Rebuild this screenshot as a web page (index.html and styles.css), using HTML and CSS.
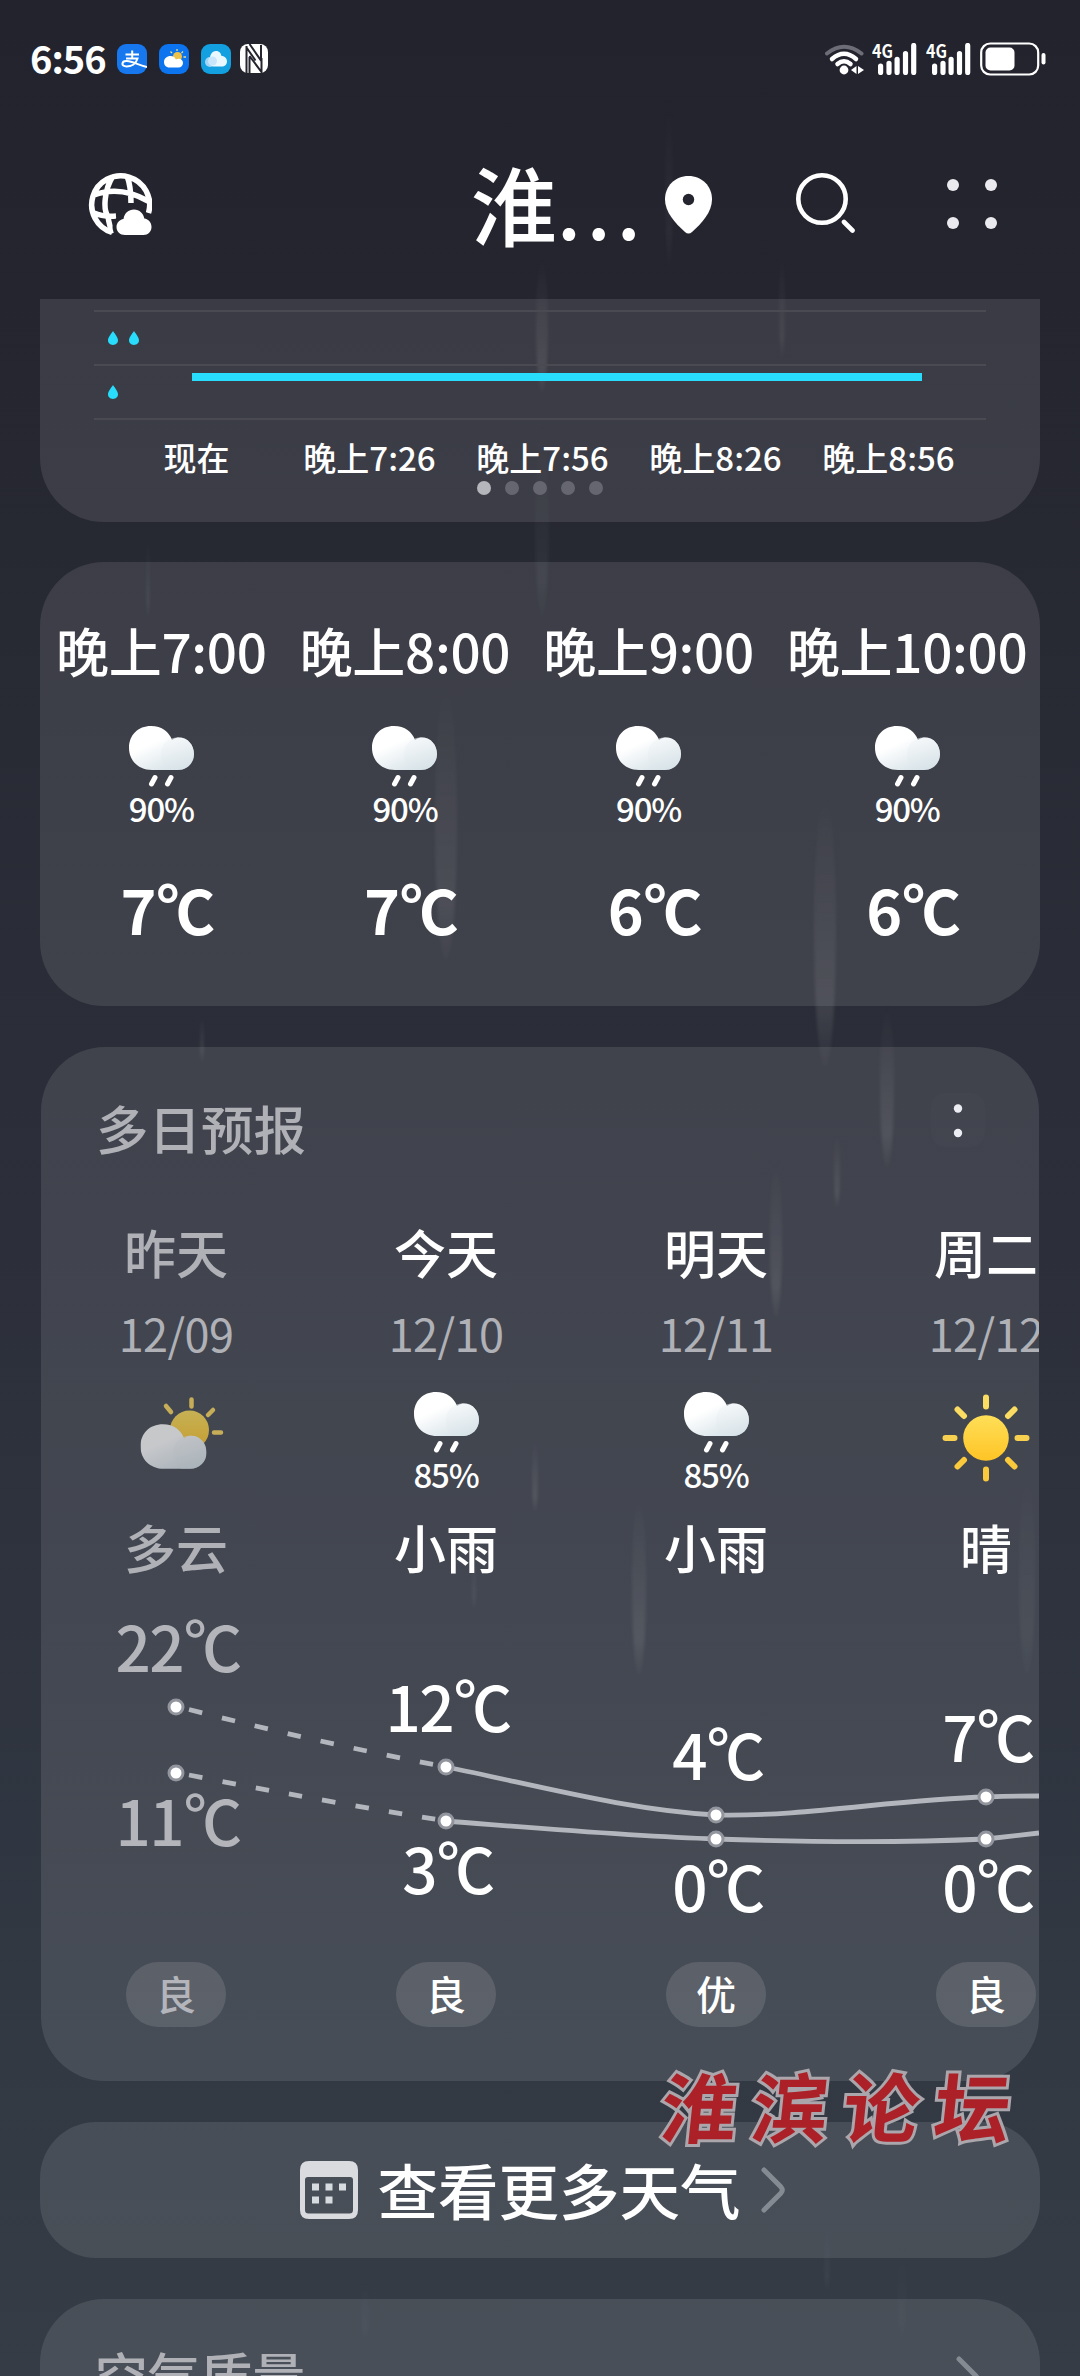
FILE: index.html
```
<!DOCTYPE html>
<html lang="zh-CN">

<head>
    <meta charset="UTF-8">
    <meta name="viewport" content="width=device-width, initial-scale=1.0">
    <title>天气</title>
    <link rel="stylesheet" href="styles.css">
</head>

<body>
    <!-- 公用图标 -->
    <svg width="0" height="0" class="defs">
        <defs>
            <linearGradient id="cloudBig" x1="0.2" y1="0.1" x2="0.8" y2="1">
                <stop offset="0.3" stop-color="#fff" />
                <stop offset="1" stop-color="#d3e0e6" />
            </linearGradient>
            <linearGradient id="cloudSmall" x1="0.4" y1="0" x2="0.6" y2="1">
                <stop offset="0" stop-color="#f3f6f8" />
                <stop offset="1" stop-color="#d9e4e9" />
            </linearGradient>
            <linearGradient id="sunFill" x1="0" y1="0" x2="0" y2="1">
                <stop offset="0" stop-color="#ffdf58" />
                <stop offset="1" stop-color="#fec425" />
            </linearGradient>
            <linearGradient id="rainFill" x1="0" y1="0" x2="0" y2="1">
                <stop offset="0" stop-color="#fff" stop-opacity="0" />
                <stop offset="0.8" stop-color="#fff" stop-opacity="0.09" />
                <stop offset="1" stop-color="#fff" stop-opacity="0.02" />
            </linearGradient>
            <symbol id="cloud" viewBox="0 0 65 44">
                <path d="M22 0C33 0 40 6 43 14C46 12 48 11.500 50 11.500C59 11.500 65 19 65 28C65 37 58 44 49 44H23C9 44 0 34 0 22C0 9 9 0 22 0Z" fill="url(#cloudBig)" />
                <path d="M49 11.500C58.500 11.500 65 19 65 28C65 37 58 44 49 44H40C34 40 32 35 32 28C32 19 39 11.500 49 11.500Z" fill="url(#cloudSmall)" opacity="0.6" />
            </symbol>
            <symbol id="rain" viewBox="0 0 65 61">
                <use href="#cloud" width="65" height="44" />
                <path d="M26 51.500L22.500 58M42 51.500L38.500 58" stroke="#fff" stroke-width="5" stroke-linecap="round" />
            </symbol>
            <symbol id="drop" viewBox="0 0 10 14">
                <path d="M5 0C7 3 10 6.500 10 9.300C10 12 7.800 14 5 14C2.200 14 0 12 0 9.300C0 6.500 3 3 5 0Z" fill="#29dcfb" />
            </symbol>
            <symbol id="signal" viewBox="0 0 46 32">
                <text x="0" y="15" class="net" textLength="21" lengthAdjust="spacingAndGlyphs">4G</text>
                <path d="M8.600 23V29.500M17 20.300V29.500M25.100 16.300V29.500M33.500 10.500V29.500M41.700 2.500V29.500" stroke="#fff" stroke-width="5.200" stroke-linecap="round" />
            </symbol>
            <symbol id="arrow" viewBox="0 0 24 46">
                <path d="M3 3L20 20Q22.500 23 20 26L3 43" fill="none" stroke="#858b93" stroke-width="5" stroke-linecap="round" />
            </symbol>
        </defs>
    </svg>

    <!-- 雨滴背景 -->
    <svg class="rainfall" width="1080" height="2376" viewBox="0 0 1080 2376" fill="url(#rainFill)">
        <ellipse cx="669" cy="180" rx="4" ry="88" opacity="0.4" />
        <ellipse cx="542" cy="325" rx="6" ry="68" />
        <ellipse cx="542" cy="520" rx="7" ry="100" opacity="0.5" />
        <ellipse cx="782" cy="305" rx="3" ry="54" opacity="0.7" />
        <ellipse cx="148" cy="578" rx="2" ry="42" opacity="0.7" />
        <ellipse cx="446" cy="820" rx="11" ry="140" opacity="0.8" />
        <ellipse cx="825" cy="930" rx="11" ry="136" />
        <ellipse cx="887" cy="1085" rx="7" ry="82" />
        <ellipse cx="837" cy="1170" rx="3" ry="38" />
        <ellipse cx="776" cy="1240" rx="6" ry="78" />
        <ellipse cx="202" cy="1038" rx="2" ry="24" />
        <ellipse cx="535" cy="1474" rx="3" ry="38" />
        <ellipse cx="474" cy="1580" rx="2" ry="30" opacity="0.6" />
        <ellipse cx="639" cy="1585" rx="7" ry="90" />
        <ellipse cx="1027" cy="1570" rx="8" ry="105" opacity="0.5" />
        <ellipse cx="827" cy="2255" rx="3" ry="36" opacity="0.4" />
        <ellipse cx="902" cy="2290" rx="5" ry="52" opacity="0.2" />
        <ellipse cx="365" cy="2310" rx="4" ry="30" opacity="0.3" />
    </svg>

    <!-- 状态栏 -->
    <div class="status">
        <span class="time">6:56</span>
        <div class="apps">
            <svg width="30" height="30" viewBox="0 0 30 30">
                <rect width="30" height="30" rx="9" fill="#1677ef" />
                <path d="M8.500 10.500H22M15.200 6.500V14.500M9 14.500H20.500C19 20 14 22.500 9.500 22.500C3.500 22.500 4.500 16.500 10 17C16 17.500 21 21 30 23" fill="none" stroke="#fff" stroke-width="2" />
            </svg>
            <svg width="30" height="30" viewBox="0 0 30 30">
                <rect width="30" height="30" rx="9" fill="#0b74ee" />
                <path d="M13 9L11.500 7.500M18 7V5M22.500 9L24 7.500M24.500 13H27" stroke="#e8dc8c" stroke-width="1.300" />
                <circle cx="18.500" cy="12.500" r="4.500" fill="#efc148" />
                <path d="M11.500 12C14.500 12 16 13.500 16.800 15.500C21 13.500 24 16 24 19C24 21.500 22 23.500 19.500 23.500H10.500C7 23.500 5 21 5 18C5 14.500 8 12 11.500 12Z" fill="#fff" />
            </svg>
            <svg width="30" height="30" viewBox="0 0 30 30">
                <rect width="30" height="30" rx="9" fill="#12a0e0" />
                <circle cx="9" cy="18" r="5" fill="#a3d5f7" />
                <path d="M15 7C18.500 7 20 9.500 20.500 12C24 12 26 14.500 26 17.500C26 20.500 23.500 22.500 21 22.500H13C10 22.500 8 20 9 16.500C8.500 11 11 7 15 7Z" fill="#e9f8ff" />
                <circle cx="11.500" cy="17" r="4.500" fill="#c7e6fb" />
            </svg>
            <svg class="nfc" width="28" height="29" viewBox="0 0 28 29">
                <rect width="28" height="29" rx="8" fill="#fff" />
                <path d="M6.500 2V29M6.500 3.500L15.500 16.500M9.500 0L21 16.500V1M9.500 12L21.500 28V14M9.500 13V29" fill="none" stroke="#24252f" stroke-width="2" />
            </svg>
        </div>
        <div class="device">
            <svg width="39" height="31" viewBox="0 0 39 31" fill="none" stroke-linecap="round">
                <path d="M2 9.500Q19 -4 36.500 9.500" stroke="#6c6d76" stroke-width="4" />
                <path d="M7 15Q19 4.500 31 15" stroke="#fff" stroke-width="4.500" />
                <path d="M12.500 20Q19 14.500 25.500 20" stroke="#fff" stroke-width="4.500" />
                <circle cx="19" cy="26" r="4.400" fill="#fff" />
                <path d="M26 26L31.500 22V30ZM39 26L33 22V30Z" fill="#fff" />
            </svg>
            <svg class="bars" width="46" height="32"><use href="#signal" /></svg>
            <svg class="bars" width="46" height="32"><use href="#signal" /></svg>
            <svg class="battery" width="66" height="34" viewBox="0 0 66 34">
                <rect x="1.200" y="1.500" width="57" height="31" rx="9" fill="none" stroke="#fff" stroke-width="2.200" />
                <rect x="5.500" y="5.500" width="29" height="23" rx="5" fill="#fff" />
                <rect x="61.500" y="11" width="4" height="11.500" rx="2" fill="#fff" />
            </svg>
        </div>
    </div>

    <!-- 顶部导航 -->
    <div class="header">
        <svg class="globe" width="64" height="64" viewBox="0 0 64 64">
            <path d="M60.500 41A29 29 0 1 0 24 60.500M25 4C16 18 15 38 20 44Q21 54 25 61M39 4Q43 14 43 31M6 23Q32 13 60 29M6 41Q15 45 28 44" fill="none" stroke="#fff" stroke-width="5.500" />
            <path d="M37 63C32 63 28.500 59.500 28.500 55C28.500 51 31.500 47.500 35.500 47C36.500 41 40.500 37.500 46 37.500C51.500 37.500 55.500 41.500 56.300 46.500C60.500 47 63.500 50.500 63.500 55C63.500 59.500 60 63 55.500 63Z" fill="#fff" stroke="#24252f" stroke-width="8" paint-order="stroke" />
        </svg>
        <h1 class="city">淮<span>...</span></h1>
        <svg class="pin" width="47" height="58" viewBox="0 0 47 58">
            <path d="M23.500 0C37 0 47 10 47 23.500C47 36 37 47 27 56Q23.500 59 20 56C10 47 0 36 0 23.500C0 10 10 0 23.500 0Z" fill="#fff" />
            <circle cx="23.500" cy="23.500" r="5.700" fill="#24252f" />
        </svg>
        <svg class="search" width="60" height="60" viewBox="0 0 60 60" fill="none" stroke="#fff" stroke-linecap="round">
            <circle cx="26" cy="26" r="23.700" stroke-width="4.600" />
            <path d="M48 49L56.500 57.500" stroke-width="4.600" />
        </svg>
        <svg class="more" width="52" height="52" viewBox="0 0 52 52" fill="#ebebef">
            <circle cx="7" cy="7" r="6" />
            <circle cx="45" cy="7" r="6" />
            <circle cx="7" cy="45" r="6" />
            <circle cx="45" cy="45" r="6" />
        </svg>
    </div>

    <!-- 降水趋势 -->
    <div class="card trend">
        <div class="line">
            <svg width="10" height="14"><use href="#drop" /></svg>
            <svg width="10" height="14"><use href="#drop" /></svg>
        </div>
        <div class="line">
            <svg width="10" height="14"><use href="#drop" /></svg>
            <i class="level"></i>
        </div>
        <div class="labels">
            <span>现在</span>
            <span>晚上7:26</span>
            <span>晚上7:56</span>
            <span>晚上8:26</span>
            <span>晚上8:56</span>
        </div>
        <div class="dots">
            <i class="active"></i><i></i><i></i><i></i><i></i>
        </div>
    </div>

    <!-- 逐小时 -->
    <div class="card hours">
        <div class="hour">
            <p class="clock">晚上7:00</p>
            <svg width="65" height="61"><use href="#rain" /></svg>
            <p class="percent">90%</p>
            <p class="temp">7<span>°</span>C</p>
        </div>
        <div class="hour">
            <p class="clock">晚上8:00</p>
            <svg width="65" height="61"><use href="#rain" /></svg>
            <p class="percent">90%</p>
            <p class="temp">7<span>°</span>C</p>
        </div>
        <div class="hour">
            <p class="clock">晚上9:00</p>
            <svg width="65" height="61"><use href="#rain" /></svg>
            <p class="percent">90%</p>
            <p class="temp">6<span>°</span>C</p>
        </div>
        <div class="hour">
            <p class="clock">晚上10:00</p>
            <svg width="65" height="61"><use href="#rain" /></svg>
            <p class="percent">90%</p>
            <p class="temp">6<span>°</span>C</p>
        </div>
    </div>

    <!-- 多日预报 -->
    <div class="card daily">
        <div class="card-title">
            <h2>多日预报</h2>
            <svg width="54" height="54" viewBox="0 0 54 54">
                <rect width="54" height="54" rx="14" fill="#fff" opacity="0.01" />
                <circle cx="27" cy="15.500" r="4.200" fill="#ecedf3" />
                <circle cx="27" cy="40" r="4.200" fill="#ecedf3" />
            </svg>
        </div>
        <div class="days">
            <div class="day past">
                <p class="name">昨天</p>
                <p class="date">12/09</p>
                <div class="icon">
                    <svg width="102" height="101" viewBox="0 0 102 101">
                        <path d="M41 14L46 20M66.500 7.500V14.500M88 18L83 23M89 40.500H96" stroke="#ffd95c" stroke-width="4.500" stroke-linecap="round" />
                        <circle cx="64.500" cy="38" r="19.500" fill="url(#sunFill)" />
                        <use href="#cloud" x="15.500" y="32" width="66" height="45" />
                    </svg>
                </div>
                <p class="name">多云</p>
            </div>
            <div class="day">
                <p class="name">今天</p>
                <p class="date">12/10</p>
                <div class="icon">
                    <svg width="65" height="61"><use href="#rain" /></svg>
                    <p class="percent">85%</p>
                </div>
                <p class="name">小雨</p>
            </div>
            <div class="day">
                <p class="name">明天</p>
                <p class="date">12/11</p>
                <div class="icon">
                    <svg width="65" height="61"><use href="#rain" /></svg>
                    <p class="percent">85%</p>
                </div>
                <p class="name">小雨</p>
            </div>
            <div class="day">
                <p class="name">周二</p>
                <p class="date">12/12</p>
                <div class="icon">
                    <svg width="102" height="101" viewBox="0 0 102 101">
                        <circle cx="51" cy="46" r="22.800" fill="url(#sunFill)" />
                        <g stroke-width="6" stroke-linecap="round">
                            <path d="M51 5.500V14.500M22.500 17.500L29 24M79.500 17.500L73 24" stroke="#fadc62" />
                            <path d="M10.500 46H19.500M82.500 46H91.500" stroke="#f8d050" />
                            <path d="M51 77.500V86.500M22.500 74.500L29 68M79.500 74.500L73 68" stroke="#fbc93c" />
                        </g>
                    </svg>
                </div>
                <p class="name">晴</p>
            </div>
        </div>
        <svg class="chart" width="998" height="386" viewBox="0 0 998 386">
            <g fill="none" stroke="#b3b6bd" stroke-width="4.800">
                <path d="M148 133.500Q275 166 393 188.500" stroke-dasharray="13.500 20.300" />
                <path d="M148 199Q275 224 396 243.500" stroke-dasharray="13.500 20.300" />
                <path d="M405 191C495 209 585 234 675 239C765 241 855 223 945 221Q972 220 998 220" />
                <path d="M405 245C495 252 585 260 675 263C765 266 855 267 945 263Q972 260 998 257" />
            </g>
            <g class="points">
                <circle cx="135" cy="131" r="7" />
                <circle cx="405" cy="191" r="7" />
                <circle cx="675" cy="239" r="7" />
                <circle cx="945" cy="221" r="7" />
                <circle cx="135" cy="197" r="7" />
                <circle cx="405" cy="245" r="7" />
                <circle cx="675" cy="263" r="7" />
                <circle cx="945" cy="263" r="7" />
            </g>
            <g class="degree">
                <text class="old" x="137" y="96">22<tspan class="ring" dy="-5">°</tspan><tspan dy="5">C</tspan></text>
                <text x="407" y="156">12<tspan class="ring" dy="-5">°</tspan><tspan dy="5">C</tspan></text>
                <text x="677" y="204">4<tspan class="ring" dy="-5">°</tspan><tspan dy="5">C</tspan></text>
                <text x="947" y="186">7<tspan class="ring" dy="-5">°</tspan><tspan dy="5">C</tspan></text>
                <text class="old" x="137" y="270">11<tspan class="ring" dy="-5">°</tspan><tspan dy="5">C</tspan></text>
                <text x="407" y="318">3<tspan class="ring" dy="-5">°</tspan><tspan dy="5">C</tspan></text>
                <text x="677" y="336">0<tspan class="ring" dy="-5">°</tspan><tspan dy="5">C</tspan></text>
                <text x="947" y="336">0<tspan class="ring" dy="-5">°</tspan><tspan dy="5">C</tspan></text>
            </g>
        </svg>
        <div class="air">
            <div><span class="old">良</span></div>
            <div><span>良</span></div>
            <div><span>优</span></div>
            <div><span>良</span></div>
        </div>
    </div>

    <!-- 更多天气 -->
    <div class="card link">
        <svg width="58" height="58" viewBox="0 0 58 58">
            <path fill-rule="evenodd" d="M9 0H49Q58 0 58 9V49Q58 58 49 58H9Q0 58 0 49V9Q0 0 9 0ZM8 16Q5 16 5 19V49Q5 52.500 8.500 52.500H49.500Q53 52.500 53 49V19Q53 16 50 16Z" fill="#dadbde" />
            <path d="M12 22.500h7v7h-7zM25.500 22.500h7v7h-7zM39 22.500h7v7h-7zM12 35.500h7v7h-7zM25.500 35.500h7v7h-7z" fill="#d6dbdf" />
        </svg>
        <span>查看更多天气</span>
        <svg width="24" height="46"><use href="#arrow" /></svg>
    </div>

    <!-- 空气质量 -->
    <div class="card quality">
        <h2>空气质量</h2>
        <svg width="24" height="46"><use href="#arrow" /></svg>
    </div>

    <div class="watermark"><span>淮</span><span>滨</span><span>论</span><span>坛</span></div>
</body>

</html>
```

FILE: styles.css
```
* {
    margin: 0;
    padding: 0;
    box-sizing: border-box;
}

body {
    position: relative;
    width: 1080px;
    height: 2376px;
    overflow: hidden;
    color: #fff;
    font-family: 'Noto Sans CJK SC', sans-serif;
    font-weight: 500;
    background: linear-gradient(#22232d 0, #24252f 300px, #272933 620px, #2b2d38 1060px, #2e333e 1600px, #323943 2050px, #353c46 2376px);
}

svg {
    display: block;
    flex: none;
}

h1,
h2 {
    font-weight: 500;
}

.defs,
.rainfall {
    position: absolute;
    left: 0;
    top: 0;
}

.rainfall {
    z-index: -1;
    filter: blur(1.5px);
}

/* 状态栏 */
.status {
    display: flex;
    align-items: center;
    height: 118px;
    padding: 0 34px 0 30px;
}

.status .time {
    width: 87px;
    font-size: 38px;
    font-weight: 700;
    line-height: 44px;
    letter-spacing: -1px;
    padding-bottom: 2px;
}

.status .apps {
    display: flex;
    gap: 12px;
}

.status .nfc {
    margin-left: -3px;
}

.status .device {
    display: flex;
    align-items: center;
    margin-left: auto;
}

.status .bars {
    margin-left: 8px;
}

.status .battery {
    margin-left: 8px;
}

.net {
    fill: #fff;
    font-size: 18px;
    font-weight: 700;
}

/* 导航 */
.header {
    display: flex;
    height: 181px;
    padding-left: 88px;
}

.header .globe {
    margin-top: 54px;
}

.header .city {
    width: 194px;
    margin: 25px 0 0 319px;
    font-size: 86px;
    line-height: 120px;
    white-space: nowrap;
}

.header .city span {
    font-size: 80px;
    letter-spacing: 6px;
}

.header .pin {
    margin-top: 58px;
}

.header .search {
    margin: 55px 0 0 84px;
}

.header .more {
    margin: 60px 0 0 90px;
}

/* 卡片 */
.card {
    width: 1000px;
    margin: 0 auto 41px;
    border-radius: 64px;
    background: rgba(255, 255, 255, 0.1);
}

.card h2 {
    color: #afb1b7;
    font-size: 52.5px;
    line-height: 60px;
}

.trend {
    height: 223px;
    margin-bottom: 40px;
    padding: 11px 54px 0;
    border-radius: 0 0 64px 64px;
}

.trend .line {
    display: flex;
    gap: 11px;
    height: 54px;
    padding: 19px 0 0 14px;
    border-top: 2px solid #4a4a53;
}

.trend .level {
    width: 730px;
    height: 8px;
    margin: -12px 0 0 63px;
    background: #28ddfc;
}

.trend .labels {
    display: flex;
    padding: 17px 0 0 16px;
    border-top: 2px solid #4a4a53;
}

.trend .labels span {
    width: 173px;
    text-align: center;
    font-size: 33px;
    line-height: 40px;
}

.trend .dots {
    display: flex;
    justify-content: center;
    gap: 14px;
    margin-top: 4px;
}

.trend .dots i {
    width: 14px;
    height: 14px;
    border-radius: 50%;
    background: #65666f;
}

.trend .dots .active {
    background: #b5b6bb;
}

.hours {
    display: flex;
    gap: 33px;
    height: 444px;
    padding: 58px 0 0 16px;
}

.hour {
    display: flex;
    flex-direction: column;
    align-items: center;
    white-space: nowrap;
}

.hour .clock {
    margin-bottom: 46px;
    font-size: 53px;
    line-height: 60px;
    letter-spacing: -0.3px;
}

.percent {
    padding-top: 1px;
    font-size: 33px;
    line-height: 40px;
    letter-spacing: -1.2px;
}

.hour .temp {
    margin-top: 46px;
    padding-left: 12px;
    font-size: 61px;
    font-weight: 700;
    line-height: 70px;
    letter-spacing: -1px;
}

/* 度数圆圈略高于数字 */
.hour .temp span {
    position: relative;
    top: -4px;
    letter-spacing: -5px;
}

/* 多日预报 */
.daily {
    width: 998px;
    height: 1034px;
    overflow: hidden;
}

.card-title {
    display: flex;
    justify-content: space-between;
    height: 175px;
    padding: 50px 54px 0 55px;
}

.card-title svg {
    margin-top: -4px;
}

.days,
.air {
    display: flex;
}

.day {
    flex: none;
    width: 270px;
    text-align: center;
}

.day .name {
    font-size: 52px;
    line-height: 60px;
}

.day .date {
    margin-top: 26px;
    color: #afb1b7;
    font-size: 45px;
    font-weight: 400;
    line-height: 50px;
    letter-spacing: -0.6px;
}

.day .icon {
    display: flex;
    flex-direction: column;
    align-items: center;
    height: 101px;
    margin: 34px 0 24px;
}

.day.past .name {
    color: #afb1b7;
}

.day.past .icon {
    opacity: 0.7;
}

.chart {
    margin-top: -1px;
}

.points circle {
    fill: #fff;
    stroke: #92959d;
    stroke-width: 3px;
}

.degree {
    fill: #fff;
    font-size: 62px;
    letter-spacing: -1.5px;
    text-anchor: middle;
}

.degree .old {
    fill: #b3b5bb;
}

.degree .ring {
    letter-spacing: -5px;
}

.air div {
    flex: none;
    width: 270px;
}

.air span {
    display: block;
    width: 100px;
    height: 65px;
    margin: 0 auto;
    border-radius: 33px;
    background: rgba(255, 255, 255, 0.12);
    font-size: 40px;
    line-height: 62px;
    text-align: center;
}

.air .old {
    color: #b3b5bb;
}

/* 底部入口 */
.link {
    display: flex;
    align-items: center;
    justify-content: center;
    gap: 20px;
    height: 136px;
    padding-left: 4px;
    border-radius: 56px;
    font-size: 60.5px;
    line-height: 62px;
}

.link span {
    padding-bottom: 3px;
}

.quality {
    display: flex;
    justify-content: space-between;
    height: 77px;
    margin-bottom: 0;
    padding: 45px 60px 0 55px;
    border-radius: 64px 64px 0 0;
    overflow: hidden;
}

.quality svg {
    margin-top: 12px;
}

/* 论坛水印，盖在卡片上面 */
.watermark {
    position: absolute;
    left: 662px;
    top: 2064px;
    display: flex;
    gap: 15px;
    color: #ac2027;
    font-size: 76px;
    font-weight: 700;
    line-height: 80px;
    -webkit-text-stroke: 6px #aaa6ab;
    paint-order: stroke fill;
    transform: skewX(-6deg);
}
```
